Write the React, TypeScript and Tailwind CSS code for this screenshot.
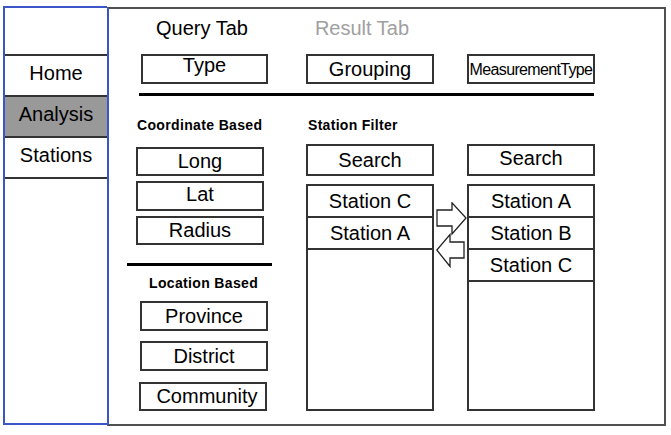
import React from "react";

const font = { fontFamily: '"Liberation Sans", Arial, sans-serif' };

function Box({
  className = "",
  small,
  children,
}: {
  className?: string;
  small?: boolean;
  children?: React.ReactNode;
}) {
  return (
    <div
      className={
        "flex items-center justify-center border-2 border-[#333333] bg-white text-black " +
        (small ? "text-[16px] leading-[18px] tracking-[-0.65px] " : "text-[20px] leading-[23px] ") +
        className
      }
    >
      {children}
    </div>
  );
}

function NavItem({ label, active }: { label: string; active?: boolean }) {
  return (
    <div
      className={
        "flex h-[41px] items-center justify-center border-b-2 border-[#333333] pb-[4px] text-[20px] leading-[23px] text-black " +
        (active ? "bg-[#999999]" : "bg-white")
      }
    >
      {label}
    </div>
  );
}

function StationList({ items }: { items: string[] }) {
  return (
    <div className="mt-[8px] flex h-[227px] w-[128px] flex-col border-2 border-[#333333] bg-white">
      {items.map((s) => (
        <div
          key={s}
          className="flex h-[32px] shrink-0 items-center justify-center border-b-2 border-[#333333] text-[20px] leading-[23px] text-black"
        >
          {s}
        </div>
      ))}
    </div>
  );
}

function Arrows() {
  return (
    <svg width="31" height="66" viewBox="0 0 31 66" className="ml-[2px] mt-[106px] shrink-0">
      <polygon
        points="1,8 16,8 16,0.8 30,16 16,32 16,24 1,24"
        fill="white"
        stroke="#222222"
        strokeWidth="1.3"
        strokeLinejoin="miter"
      />
      <polygon
        points="28,40 14,40 14,32.5 0.8,48 14,64.5 14,56 28,56"
        fill="white"
        stroke="#222222"
        strokeWidth="1.3"
        strokeLinejoin="miter"
      />
    </svg>
  );
}

export default function App() {
  return (
    <div className="flex h-[435px] w-[671px] overflow-hidden bg-white" style={font}>
      {/* Sidebar */}
      <div className="ml-[3px] mt-[6px] flex h-[419px] w-[104px] shrink-0 flex-col border-b-2 border-l-2 border-t-2 border-[#3a56c8]">
        <div className="h-[48px] border-b-2 border-[#333333]" />
        <NavItem label="Home" />
        <NavItem label="Analysis" active />
        <NavItem label="Stations" />
      </div>

      {/* Main panel */}
      <div className="mt-[7px] flex h-[419px] w-[559px] shrink-0 flex-col border-2 border-[#505050] border-l-[#3a56c8]">
        <div className="mt-[8px] flex text-[20px] leading-[23px]">
          <span className="ml-[47px] text-black">Query Tab</span>
          <span className="ml-[67px] text-[#a0a0a0]">Result Tab</span>
        </div>

        <div className="ml-[32px] mt-[14px] flex">
          <Box className="h-[30px] w-[127px] pb-[7px]">Type</Box>
          <Box className="ml-[38px] h-[30px] w-[128px]">Grouping</Box>
          <Box small className="ml-[33px] h-[30px] w-[128px] pt-[1px]">
            MeasurementType
          </Box>
        </div>

        <div className="ml-[30px] mt-[9px] h-[3px] w-[455px] bg-black" />

        <div className="ml-[18px] flex items-start">
          {/* Column 1 */}
          <div className="flex w-[145px] shrink-0 flex-col">
            <div className="ml-[10px] mt-[21px] text-[14px] font-bold leading-[16px] tracking-[0.35px] text-black">
              Coordinate Based
            </div>
            <Box className="ml-[9px] mt-[14px] h-[29px] w-[128px]">Long</Box>
            <Box className="ml-[9px] mt-[5px] h-[30px] w-[128px] pb-[3px]">Lat</Box>
            <Box className="ml-[9px] mt-[5px] h-[29px] w-[128px]">Radius</Box>
            <div className="mt-[18px] h-[3px] w-[145px] bg-black" />
            <div className="ml-[22px] mt-[9px] text-[14px] font-bold leading-[16px] tracking-[0.35px] text-black">
              Location Based
            </div>
            <Box className="ml-[13px] mt-[10px] h-[30px] w-[128px]">Province</Box>
            <Box className="ml-[13px] mt-[10px] h-[30px] w-[128px]">District</Box>
            <Box className="ml-[12px] mt-[11px] h-[29px] w-[128px] pl-[8px]">Community</Box>
          </div>

          {/* Column 2 */}
          <div className="ml-[34px] flex w-[128px] shrink-0 flex-col">
            <div className="ml-[2px] mt-[21px] text-[14px] font-bold leading-[16px] tracking-[0.3px] text-black">
              Station Filter
            </div>
            <Box className="mt-[11px] h-[32px] w-[128px]">Search</Box>
            <StationList items={["Station C", "Station A"]} />
          </div>

          <Arrows />

          {/* Column 3 */}
          <div className="flex w-[128px] shrink-0 flex-col">
            <Box className="mt-[48px] h-[32px] w-[128px] pb-[4px]">Search</Box>
            <StationList items={["Station A", "Station B", "Station C"]} />
          </div>
        </div>
      </div>
    </div>
  );
}
